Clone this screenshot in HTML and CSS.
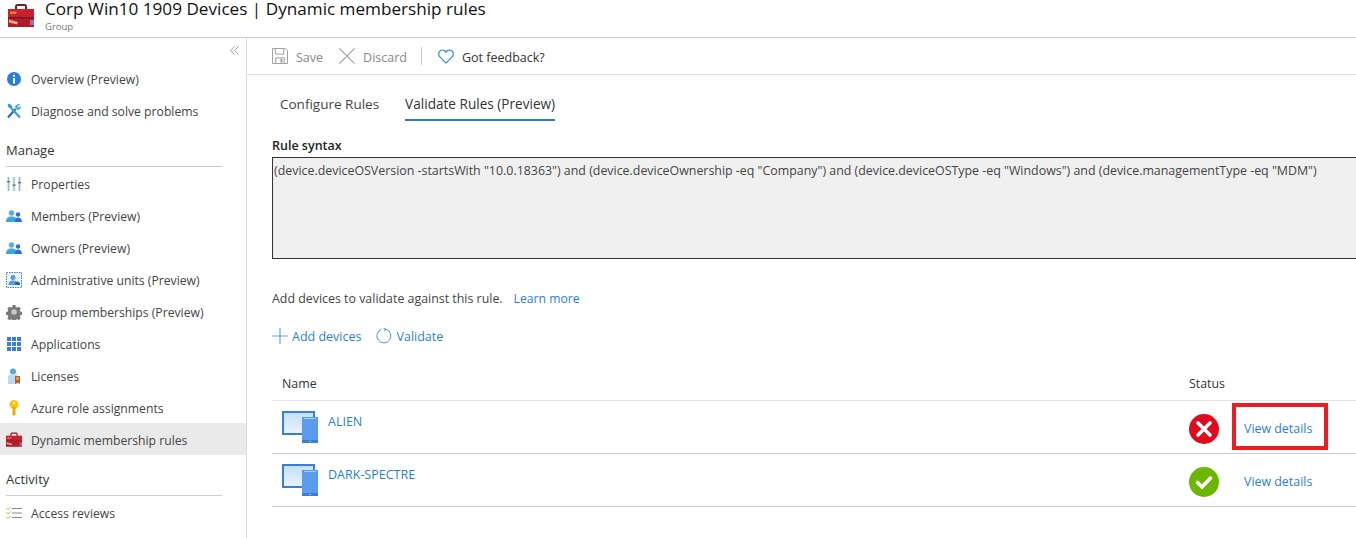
FILE: index.html
```html
<!DOCTYPE html>
<html lang="en">
<head>
<meta charset="utf-8">
<title>Dynamic membership rules</title>
<link rel="stylesheet" href="styles.css">
</head>
<body>
<svg class="defs" width="0" height="0" aria-hidden="true">
  <defs>
    <linearGradient id="screen" x1="0" y1="0" x2="0" y2="1">
      <stop offset="0" stop-color="#c4e0f7"/>
      <stop offset="1" stop-color="#e8f3fc"/>
    </linearGradient>
    <symbol id="toolbox" viewBox="0 0 26 24">
      <path d="M8 6V2.500A1.500 1.500 0 0 1 9.500 1h7A1.500 1.500 0 0 1 18 2.500V6" fill="none" stroke="#7a1f1f" stroke-width="2"/>
      <path d="M0 5h26v9H0z" fill="#c8202e"/>
      <path d="M0 14h26v9H0z" fill="#b01c2a"/>
      <path d="M0 13h26v1.500H0z" fill="#7a1420"/>
      <path d="M2 7.500h7l-1 2.500H2z" fill="#f47b20"/>
      <path d="M1 15.500l9 2.500-1 2.500-8-2z" fill="#f0a878"/>
      <path d="M22 16h4v5h-4z" fill="#9a6fc0"/>
    </symbol>
    <symbol id="people" viewBox="0 0 16 12">
      <circle cx="5.500" cy="3" r="2.800" fill="#59b4d9"/>
      <path d="M0 12c0-4 2-5.500 5.500-5.500S11 8 11 12z" fill="#3fa5dc"/>
      <circle cx="12" cy="4.500" r="2.200" fill="#2a6fc9"/>
      <path d="M9 12c0-3 1-4.500 3-4.500s4 1.500 4 4.500z" fill="#2a6fc9"/>
    </symbol>
    <symbol id="device" viewBox="0 0 36 32">
      <path d="M0 0h33v24H0z" fill="#3a7fd5"/>
      <path d="M2 2h29v20H2z" fill="url(#screen)"/>
      <path d="M20 6h16v26H20z" fill="#5c9cee"/>
      <path d="M20 29h16v3H20z" fill="#3a7fd5"/>
      <path d="M22 7h12v1H22z" fill="#a8ccf4"/>
      <path d="M27.500 30h1v1h-1z" fill="#fff"/>
    </symbol>
  </defs>
</svg>
<header class="blade-header">
  <svg class="header-icon"><use href="#toolbox"/></svg>
  <div class="header-text">
    <h1>Corp Win10 1909 Devices | Dynamic membership rules</h1>
    <p>Group</p>
  </div>
</header>
<div class="blade">
  <nav class="sidebar">
    <div class="collapse">
      <svg width="9" height="9" viewBox="0 0 9 9"><path d="M4.500 0.500L0.500 4.500l4 4M8.500 0.500l-4 4 4 4" fill="none" stroke="#888" stroke-width="0.800"/></svg>
    </div>
    <a class="nav-item">
      <svg class="nav-icon" viewBox="0 0 16 16"><circle cx="8" cy="8" r="7" fill="#2a7fd5"/><path d="M7 7h2v5.500H7zM7 3.700h2v2H7z" fill="#fff"/></svg>
      <span>Overview (Preview)</span>
    </a>
    <a class="nav-item">
      <svg class="nav-icon" viewBox="0 0 16 16"><path d="M2 14.500L9.500 6" stroke="#1f6fa8" stroke-width="2.200"/><path d="M14 14.500L5 5" stroke="#3a9bd5" stroke-width="2.200"/><path d="M1.500 1.500l2-1 3 3-1 2-3-1z" fill="#3a9bd5"/><path d="M14.500 1L12 3.500 13 4.500 15 3c.5 2-1 4.500-4 4L9 5C8.500 2.500 11.500 .5 14.500 1z" fill="#59b4d9"/></svg>
      <span>Diagnose and solve problems</span>
    </a>
    <h2 class="nav-heading">Manage</h2>
    <a class="nav-item">
      <svg class="nav-icon" viewBox="0 0 16 16"><path d="M1 1h3v14H1zM6.500 1h3v14h-3zM12 1h3v14h-3z" fill="#cfe8f5"/><path d="M2.500 1v14M8 1v14M13.500 1v14" stroke="#999" stroke-width="0.700"/><path d="M1 5h3v1.200H1zM6.500 8.500h3v1.200h-3zM12 6h3v1.200h-3z" fill="#666"/></svg>
      <span>Properties</span>
    </a>
    <a class="nav-item">
      <svg class="nav-icon"><use href="#people"/></svg>
      <span>Members (Preview)</span>
    </a>
    <a class="nav-item">
      <svg class="nav-icon"><use href="#people"/></svg>
      <span>Owners (Preview)</span>
    </a>
    <a class="nav-item">
      <svg class="nav-icon" viewBox="0 0 16 16"><rect x="0.500" y="0.500" width="15" height="15" fill="#eaf3fb" stroke="#3a7fd5" stroke-dasharray="1.500 1"/><circle cx="7" cy="5.500" r="2.500" fill="#5a9ae0"/><path d="M2.500 13c0-3.500 2-4.500 4.500-4.500s4.500 1 4.500 4.500z" fill="#5a9ae0"/><path d="M9 13c0-2.500 1-3.500 2.500-3.500S14 10.500 14 13z" fill="#2a5fa9"/></svg>
      <span>Administrative units (Preview)</span>
    </a>
    <a class="nav-item">
      <svg class="nav-icon" viewBox="0 0 16 16"><path d="M6.500 .5h3l.4 2 1.500.7 1.800-1 2 2.100-1 1.700.6 1.500 2 .5v3l-2 .4-.6 1.500 1 1.800-2 2-1.800-1-1.500.6-.4 2h-3l-.4-2-1.500-.6-1.800 1-2-2 1-1.800-.6-1.500-2-.4v-3l2-.5.6-1.500-1-1.700 2-2.100 1.800 1 1.500-.7z" transform="translate(0.600 0.600) scale(0.930)" fill="#7a7a7a"/><circle cx="8" cy="8" r="2.800" fill="#c8c8c8"/></svg>
      <span>Group memberships (Preview)</span>
    </a>
    <a class="nav-item">
      <svg class="nav-icon" viewBox="-1 -1 16 16"><path d="M0 0h4v4H0zM5 0h4v4H5zM10 0h4v4h-4zM0 5h4v4H0zM5 5h4v4H5zM10 5h4v4h-4zM0 10h4v4H0zM5 10h4v4H5zM10 10h4v4h-4z" fill="#3a7fd5"/></svg>
      <span>Applications</span>
    </a>
    <a class="nav-item">
      <svg class="nav-icon" viewBox="0 0 16 16"><circle cx="7" cy="3.500" r="3" fill="#59a8d9"/><path d="M2 16V9c0-2 1-2.500 2.500-2.500h5C11 6.500 12 7 12 9v7z" fill="#b5dcf0"/><path d="M9 8h5v8l-2.500-1.500L9 16z" fill="#c8571a"/><circle cx="11.500" cy="10.500" r="1.500" fill="#f4a460"/></svg>
      <span>Licenses</span>
    </a>
    <a class="nav-item">
      <svg class="nav-icon" viewBox="0 0 16 16"><circle cx="8" cy="4.500" r="4.500" fill="#fcc419"/><path d="M6.500 7h3v7.500L8 16l-1.500-1.500z" fill="#f0a800"/><circle cx="8" cy="3" r="1.200" fill="#fff3b0"/></svg>
      <span>Azure role assignments</span>
    </a>
    <a class="nav-item is-active">
      <svg class="nav-icon"><use href="#toolbox"/></svg>
      <span>Dynamic membership rules</span>
    </a>
    <h2 class="nav-heading nav-heading-second">Activity</h2>
    <a class="nav-item">
      <svg class="nav-icon" viewBox="0 0 16 16"><path d="M6 3.500h10M6 8h10M6 12.500h10" stroke="#8a8a8a" stroke-width="1.200"/><path d="M.5 3l1.500 1.500L4.500 2M.5 7.500L2 9l2.500-2.500M.5 12L2 13.500 4.500 11" fill="none" stroke="#a4c639" stroke-width="1"/></svg>
      <span>Access reviews</span>
    </a>
  </nav>
  <main class="content">
    <div class="toolbar">
      <button class="tool is-disabled">
        <svg width="16" height="16" viewBox="0 0 17 17"><path d="M.5.5h13.500l2.500 2.500v13.500H.5z" fill="none" stroke="#9a9a9a"/><path d="M3.500 .5v6h9v-6M4 16.500v-6h9v6" fill="none" stroke="#9a9a9a"/><path d="M9 11.500h2v4H9z" fill="#9a9a9a"/></svg>
        <span>Save</span>
      </button>
      <button class="tool is-disabled">
        <svg width="16" height="16" viewBox="0 0 17 17"><path d="M.5.500l16 16M16.500.500l-16 16" stroke="#9a9a9a" stroke-width="1.100"/></svg>
        <span>Discard</span>
      </button>
      <div class="tool-sep"></div>
      <button class="tool">
        <svg width="16" height="15" viewBox="0 0 17 16"><path d="M8.500 15L1.800 8.200C-.2 6 .8 1 4.700 1c1.800 0 3 1 3.800 2.300C9.300 2 10.500 1 12.300 1c3.900 0 4.900 5 2.900 7.200z" fill="none" stroke="#2a7fd5" stroke-width="1.200"/></svg>
        <span>Got feedback?</span>
      </button>
    </div>
    <div class="tabs">
      <a class="tab">Configure Rules</a>
      <a class="tab is-selected">Validate Rules (Preview)</a>
    </div>
    <label class="field-label">Rule syntax</label>
    <div class="rule-box">(device.deviceOSVersion -startsWith "10.0.18363") and (device.deviceOwnership -eq "Company") and (device.deviceOSType -eq "Windows") and (device.managementType -eq "MDM")</div>
    <p class="hint">Add devices to validate against this rule.<a class="link hint-link">Learn more</a></p>
    <div class="actions">
      <a class="action link">
        <svg width="16" height="16" viewBox="0 0 16 16"><path d="M8 0v16M0 8h16" stroke="#59a8d9" stroke-width="1.100"/></svg>
        <span>Add devices</span>
      </a>
      <a class="action link">
        <svg width="16" height="16" viewBox="0 0 16 16"><path d="M5.500 1.300A7 7 0 1 0 10 1.200M10.200 1.200L7.800 2.800M9.800 1.200L7.500 .2" fill="none" stroke="#4a9ac9" stroke-width="1"/></svg>
        <span>Validate</span>
      </a>
    </div>
    <div class="table">
      <div class="table-head">
        <span class="col-name">Name</span>
        <span class="col-status">Status</span>
      </div>
      <div class="table-row">
        <div class="col-name device">
          <svg class="device-icon"><use href="#device"/></svg>
          <a class="link device-link">ALIEN</a>
        </div>
        <div class="col-status status">
          <svg width="30" height="30" viewBox="0 0 30 30"><circle cx="15" cy="15" r="15" fill="#e00b1c"/><path d="M9 9l12 12M21 9L9 21" stroke="#fff" stroke-width="3.600" stroke-linecap="round"/></svg>
          <a class="link details is-marked">View details</a>
        </div>
      </div>
      <div class="table-row">
        <div class="col-name device">
          <svg class="device-icon"><use href="#device"/></svg>
          <a class="link device-link">DARK-SPECTRE</a>
        </div>
        <div class="col-status status">
          <svg width="30" height="30" viewBox="0 0 30 30"><circle cx="15" cy="15" r="15" fill="#6bb700"/><path d="M8.500 15.500l4.500 4.500 8.500-9" fill="none" stroke="#fff" stroke-width="3.600" stroke-linecap="round" stroke-linejoin="round"/></svg>
          <a class="link details">View details</a>
        </div>
      </div>
    </div>
  </main>
</div>
</body>
</html>
```
FILE: styles.css
```css
*, *::after { box-sizing: border-box; }
html, body { margin: 0; padding: 0; height: 538px; overflow: hidden; background: #fff; }
body { font-family: "Open Sans", "Noto Sans", sans-serif; font-size: 12.400px; color: #333; }
.defs { display: block; height: 0; }

.blade-header { display: flex; height: 38px; border-bottom: 1px solid #ccc; overflow: hidden; }
.header-icon { width: 26px; height: 24px; margin: 4px 0 0 8px; flex: none; }
.header-text { margin-left: 11px; }
.header-text h1 { margin: 0 0 2px; font-size: 17.150px; line-height: 18px; font-weight: 400; color: #111; }
.header-text p { margin: 0; font-size: 9.500px; line-height: 13px; color: #777; }

.blade { display: flex; height: 500px; }
.sidebar { width: 247px; flex: none; border-right: 1px solid #ddd; font-size: 12.200px; }
.collapse { height: 25px; display: flex; justify-content: flex-end; align-items: center; padding-right: 7px; }
.nav-item { display: flex; align-items: center; height: 32px; padding-left: 6px; color: #444; }
.nav-heading ~ .nav-item { padding-top: 2px; }
.nav-icon { width: 16px; height: 16px; flex: none; margin-right: 9px; }
.nav-item.is-active { background: #ebeaea; }
.nav-heading { margin: 0 24px 0 6px; height: 40px; padding-top: 15px; font-size: 13px; line-height: 17px; font-weight: 400; color: #333; border-bottom: 1px solid #ccc; }
.nav-heading-second { height: 41px; padding-top: 16px; }

.content { flex: 1; min-width: 0; }
.toolbar { display: flex; align-items: center; height: 37px; padding-left: 25px; border-bottom: 1px solid #ddd; font-size: 12.500px; }
.tool { display: flex; align-items: center; gap: 8px; padding: 0; margin-right: 16px; border: 0; background: none; font: inherit; color: #333; }
.tool span { margin-top: 2px; }
.tool.is-disabled { color: #888; }
.tool-sep { width: 1px; height: 18px; background: #ccc; margin: 0 16px 0 -2px; }
.tabs { display: flex; gap: 26px; height: 47px; padding: 16px 0 0 33px; }
.tab { height: 30px; line-height: 26px; font-size: 13.500px; color: #444; }
.tab.is-selected { color: #333; font-size: 13.600px; border-bottom: 2px solid #2a7fd5; }
.field-label { display: block; margin: 15px 0 0 25px; height: 20px; line-height: 17px; font-weight: 600; color: #222; font-size: 12.500px; }
.rule-box { margin-left: 25px; width: 1120px; height: 102px; padding: 4px 0 0 1px; line-height: 17px; white-space: nowrap; background: #f0f0f0; border: 1px solid #333; color: #444; }
.hint { margin: 31px 0 0 25px; height: 18px; line-height: 18px; color: #444; }
.hint-link { margin-left: 11px; font-size: 12.200px; }
.link { color: #2a7fd5; }
.actions { display: flex; gap: 15px; margin: 14px 0 0 25px; height: 28px; align-items: center; font-size: 12.500px; }
.action { display: flex; align-items: center; gap: 4px; }
.table { margin: 25px 0 0 25px; }
.table-head { display: flex; height: 26px; border-bottom: 1px solid #e5e5e5; align-items: flex-start; line-height: 17px; color: #333; }
.table-row { display: flex; height: 53px; border-bottom: 1px solid #ccc; }
.col-name { width: 907px; padding-left: 10px; flex: none; }
.col-status { padding-left: 10px; }
.device { display: flex; align-items: flex-start; padding-top: 10px; }
.device-icon { width: 36px; height: 32px; flex: none; }
.device-link { margin: 2px 0 0 10px; line-height: 17px; font-size: 12.500px; }
.status { position: relative; display: flex; align-items: flex-start; padding-top: 13px; }
.details { margin: 6px 0 0 25px; line-height: 17px; }
.is-marked::after { content: ""; position: absolute; left: 53px; top: 2px; width: 96px; height: 47px; border: 4px solid #ed1c24; }
```
